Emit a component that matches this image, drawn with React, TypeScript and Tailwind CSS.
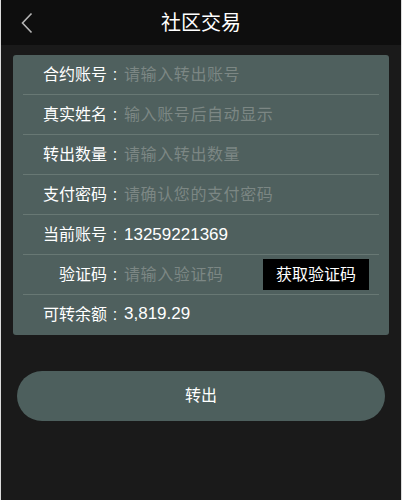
import { useState } from 'react';

const font = { fontFamily: '"Liberation Sans", "Noto Sans CJK SC", sans-serif' };

function Row({ label, children, last }: { label: string; children: React.ReactNode; last?: boolean }) {
  return (
    <div className={`flex items-center h-[40px] mx-[10px] ${last ? '' : 'border-b border-[#687874]'}`}>
      <span className="w-[84px] shrink-0 text-right text-white text-[16px]">{label}</span>
      <span className="w-[16px] shrink-0 text-center text-white text-[16px]">:</span>
      <div className="flex-1 flex items-center min-w-0">{children}</div>
    </div>
  );
}

function Field({ placeholder, type = 'text' }: { placeholder: string; type?: string }) {
  const [v, setV] = useState('');
  return (
    <input type={type} value={v} onChange={e => setV(e.target.value)} placeholder={placeholder}
      className="w-full bg-transparent outline-none text-white text-[16px] tracking-[0.6px] placeholder:text-[#7c8784] pl-px" style={font} />
  );
}

export default function App() {
  return (
    <div className="min-h-[500px] bg-[#dcdcdc]" style={font}>
      <div className="mx-auto w-[400px] min-h-[500px] bg-[#1a1a1a]">
        <header className="relative h-[45px] bg-[#0e0e0e] flex items-center justify-center">
          <button className="absolute left-[19px] top-[12px]">
            <svg width="14" height="22" viewBox="0 0 14 22" fill="none"><path d="M11.5 1.5 2.5 11l9 9.5" stroke="#b5b5b5" strokeWidth="1.6" /></svg>
          </button>
          <h1 className="text-white text-[20px]">社区交易</h1>
        </header>
        <div className="px-[12px] pt-[10px]">
          <div className="bg-[#4f605e] rounded-[3px]">
            <Row label="合约账号"><Field placeholder="请输入转出账号" /></Row>
            <Row label="真实姓名"><Field placeholder="输入账号后自动显示" /></Row>
            <Row label="转出数量"><Field placeholder="请输入转出数量" /></Row>
            <Row label="支付密码"><Field placeholder="请确认您的支付密码" type="password" /></Row>
            <Row label="当前账号"><span className="text-white text-[17px] pl-px">13259221369</span></Row>
            <Row label="验证码">
              <Field placeholder="请输入验证码" />
              <button className="shrink-0 w-[106px] h-[31px] bg-black text-white text-[16px] mr-[10px]">获取验证码</button>
            </Row>
            <Row label="可转余额" last><span className="text-white text-[17px] pl-px -mt-[2px]">3,819.29</span></Row>
          </div>
        </div>
        <div className="px-[16px] pt-[36px]">
          <button className="w-full h-[50px] rounded-full bg-[#4d5f5d] text-white text-[16px]">转出</button>
        </div>
      </div>
    </div>
  );
}
